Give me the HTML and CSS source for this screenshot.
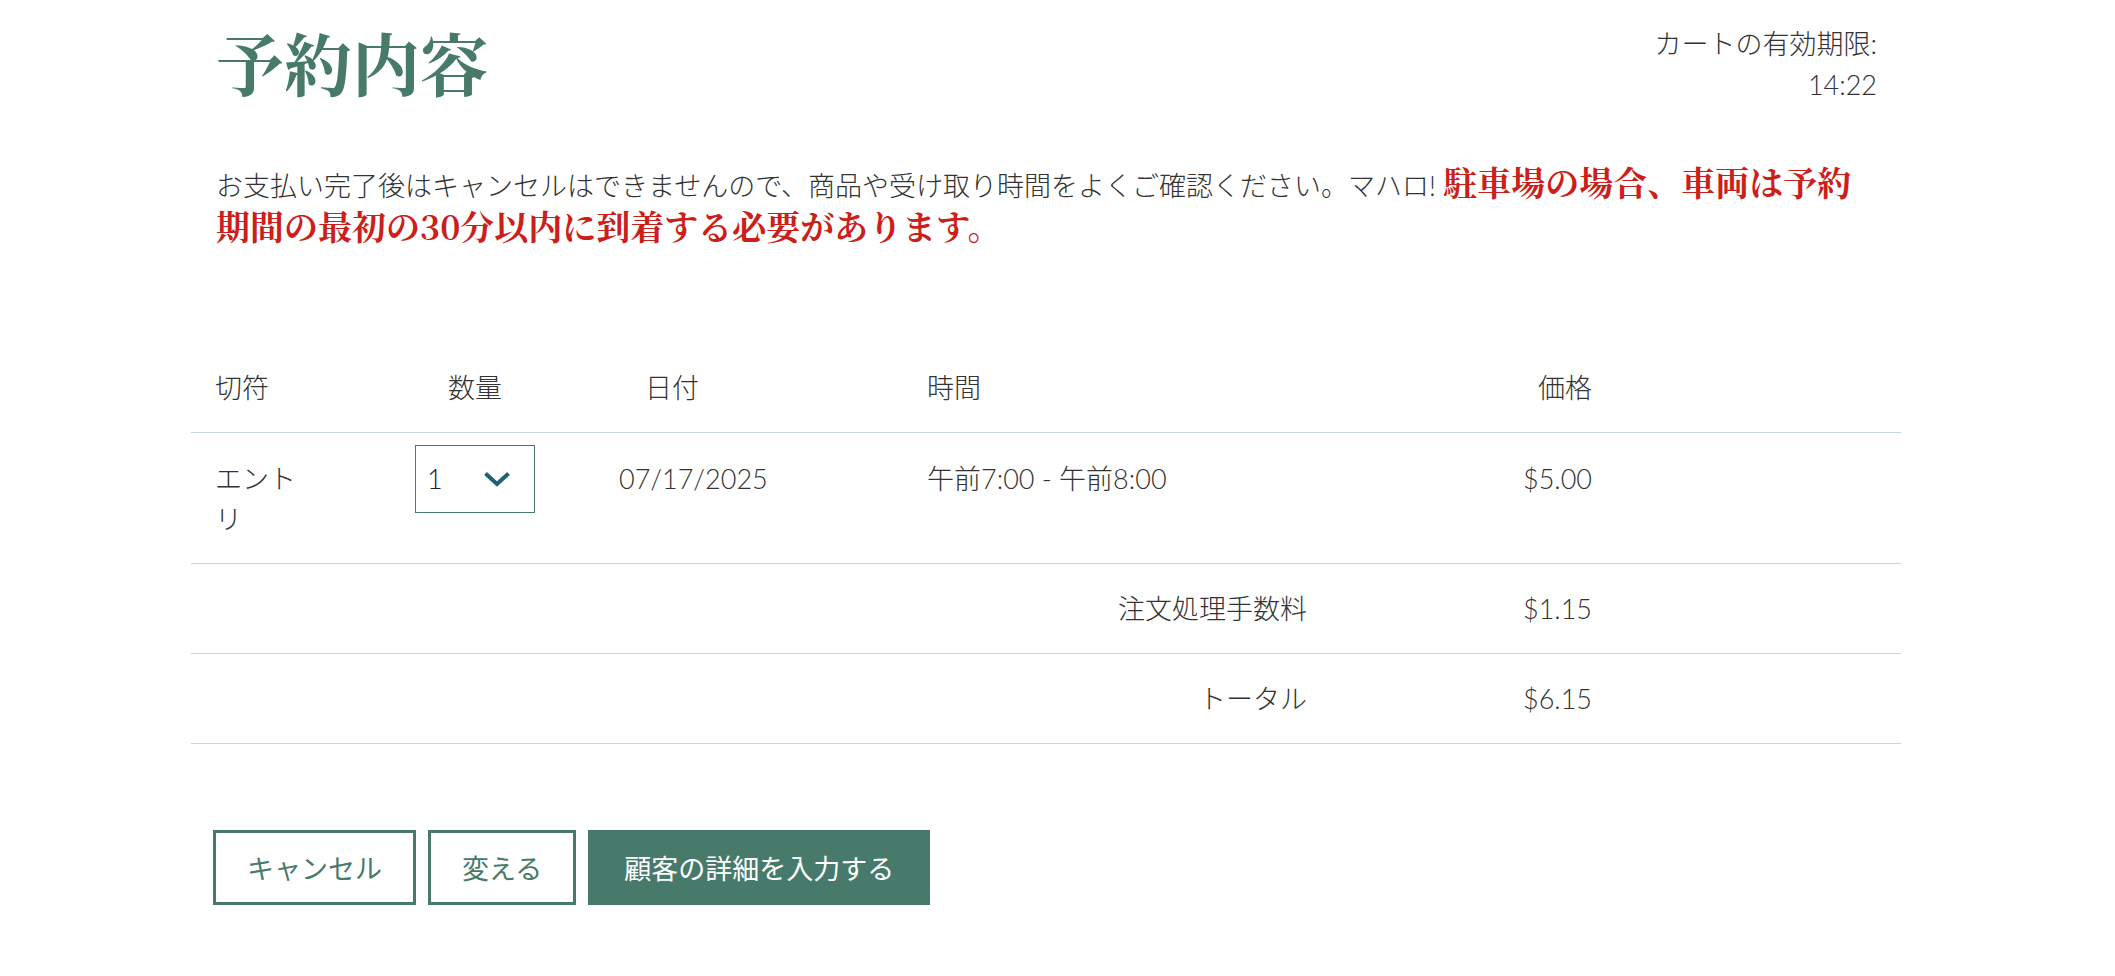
FILE: index.html
```html
<!DOCTYPE html>
<html lang="ja">
<head>
    <meta charset="UTF-8">
    <meta name="viewport" content="width=device-width, initial-scale=1.0">
    <title>予約内容</title>
    <link rel="stylesheet" href="styles.css">
</head>
<body>
    <div class="page">
        <header class="summary-head">
            <h1 class="summary-title">予約内容</h1>
            <div class="cart-timer">
                <div>カートの有効期限:</div>
                <div>14:22</div>
            </div>
        </header>

        <p class="notice">お支払い完了後はキャンセルはできませんので、商品や受け取り時間をよくご確認ください。マハロ! <strong class="notice-alert">駐車場の場合、車両は予約期間の最初の30分以内に到着する必要があります。</strong></p>

        <table class="order-table">
            <colgroup>
                <col class="w-ticket">
                <col class="w-qty">
                <col class="w-date">
                <col class="w-time">
                <col class="w-price">
                <col class="w-extra">
            </colgroup>
            <thead>
                <tr>
                    <th class="cell-ticket">切符</th>
                    <th class="cell-qty">数量</th>
                    <th class="cell-date-head">日付</th>
                    <th class="cell-time">時間</th>
                    <th class="cell-price">価格</th>
                    <th></th>
                </tr>
            </thead>
            <tbody>
                <tr class="item-row">
                    <td class="cell-ticket">エントリ</td>
                    <td class="cell-qty">
                        <div class="qty-select">
                            <span>1</span>
                            <svg width="28" height="16" viewBox="0 0 28 16">
                                <polyline points="2.5,2.5 14,13 25.5,2.5" fill="none" stroke="#1d6570" stroke-width="4"/>
                            </svg>
                        </div>
                    </td>
                    <td class="cell-date">07/17/2025</td>
                    <td class="cell-time">午前7:00 - 午前8:00</td>
                    <td class="cell-price">$5.00</td>
                    <td></td>
                </tr>
                <tr class="sum-row">
                    <td colspan="4" class="sum-label">注文処理手数料</td>
                    <td class="cell-price">$1.15</td>
                    <td></td>
                </tr>
                <tr class="sum-row">
                    <td colspan="4" class="sum-label">トータル</td>
                    <td class="cell-price">$6.15</td>
                    <td></td>
                </tr>
            </tbody>
        </table>

        <div class="actions">
            <button class="btn btn-outline">キャンセル</button>
            <button class="btn btn-outline">変える</button>
            <button class="btn btn-primary">顧客の詳細を入力する</button>
        </div>
    </div>
</body>
</html>
```

FILE: styles.css
```css
* {
    margin: 0;
    padding: 0;
    box-sizing: border-box;
}

body {
    background: white;
    color: #333;
    font-family: Lato, "Noto Sans CJK JP", sans-serif;
    font-size: 27px;
    font-weight: 300;
}

.page {
    width: 1710px;
    margin: 0 191px;
}

.summary-head {
    display: flex;
    justify-content: space-between;
    align-items: flex-start;
    padding: 20px 24px 0 25px;
}

.summary-title {
    font-family: "Noto Serif CJK JP", "Noto Sans CJK JP", serif;
    font-size: 68px;
    line-height: 84px;
    font-weight: 700;
    color: #477a6a;
}

.cart-timer {
    margin-top: 3px;
    text-align: right;
    line-height: 41px;
    color: #333;
}

.notice {
    margin-top: 59px;
    padding: 0 24px 0 25px;
    line-height: 44px;
}

.notice-alert {
    font-family: "Noto Serif CJK JP", "Noto Sans CJK JP", serif;
    font-size: 34px;
    line-height: 34px;
    font-weight: 700;
    color: #cc1f1a;
}

.order-table {
    width: 100%;
    margin-top: 96px;
    border-collapse: collapse;
    table-layout: fixed;
}

.w-ticket { width: 140px; }
.w-qty { width: 288px; }
.w-date { width: 282px; }
.w-time { width: 430px; }
.w-price { width: 285px; }
.w-extra { width: 285px; }

.order-table th,
.order-table td {
    padding: 0 24px;
    line-height: 40px;
    font-weight: 300;
    text-align: left;
    vertical-align: baseline;
    border-bottom: 1px solid #c5d9e0;
}

.order-table th {
    padding-top: 20px;
    padding-bottom: 24px;
}

.item-row td {
    padding-top: 12px;
    padding-bottom: 24px;
}

.sum-row td {
    padding-top: 25px;
    padding-bottom: 24px;
}

.order-table .cell-qty {
    padding: 0;
    text-align: center;
}

.item-row .cell-qty {
    padding-top: 12px;
}

.order-table .cell-date-head {
    padding-left: 26px;
}

.order-table .cell-date {
    padding-left: 0;
}

.order-table .cell-time {
    padding-left: 26px;
}

.order-table .cell-price,
.order-table .sum-label {
    text-align: right;
}

.qty-select {
    display: inline-flex;
    align-items: center;
    justify-content: space-between;
    width: 120px;
    height: 68px;
    padding: 0 23px 0 11px;
    border: 1px solid #477a6a;
    color: #222;
    text-align: left;
}

.actions {
    display: flex;
    gap: 12px;
    margin-top: 86px;
    padding-left: 22px;
}

.btn {
    height: 75px;
    padding: 0 31px;
    border: 3px solid #477a6a;
    font-family: Lato, "Noto Sans CJK JP", sans-serif;
    font-size: 27px;
    font-weight: 400;
    cursor: pointer;
}

.btn-outline {
    background: white;
    color: #477a6a;
}

.btn-primary {
    padding: 0 33px;
    background: #477a6a;
    color: white;
}
```
